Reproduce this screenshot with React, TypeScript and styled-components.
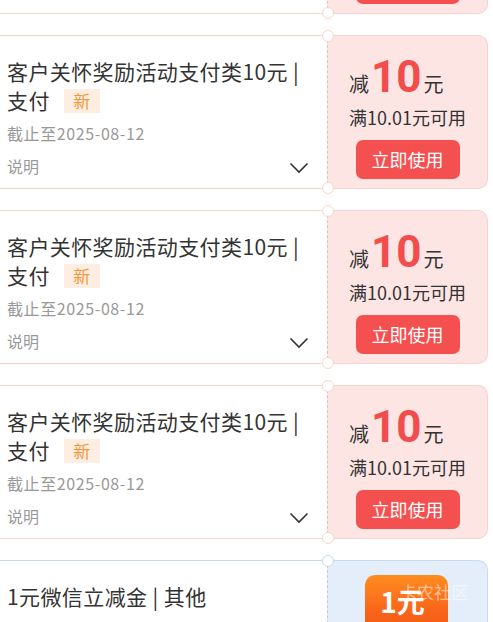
import React from "react";
import styled, { createGlobalStyle, css } from "styled-components";

const GlobalStyle = createGlobalStyle`
  body {
    margin: 0;
    background: #ffffff;
    overflow: hidden;
    font-family: "Noto Sans CJK SC", "Noto Sans", sans-serif;
  }
`;

type Tone = "red" | "blue";

const coupons = [
  { id: 0, date: "2025-08-12" },
  { id: 1, date: "2025-08-12" },
  { id: 2, date: "2025-08-12" },
  { id: 3, date: "2025-08-12" },
];

const App: React.FC = () => {
  return (
    <>
      <GlobalStyle />
      <List>
        {coupons.map((c) => (
          <Card key={c.id}>
            <LeftBlock tone="red">
              <Title>
                客户关怀奖励活动支付类10元 |<br />
                支付<NewTag>新</NewTag>
              </Title>
              <DateText>截止至{c.date}</DateText>
              <DescRow>
                <span>说明</span>
                <svg width="20" height="12" viewBox="0 0 20 12">
                  <path d="M1.5 1.5 L10 10 L18.5 1.5" fill="none" stroke="#333" strokeWidth="1.6" />
                </svg>
              </DescRow>
            </LeftBlock>
            <RightBlock tone="red">
              <Notch tone="red" pos="top" />
              <Notch tone="red" pos="bottom" />
              <AmountRow>
                <Small>减</Small>
                <Big>10</Big>
                <Small>元</Small>
              </AmountRow>
              <Condition>满10.01元可用</Condition>
              <UseButton>立即使用</UseButton>
            </RightBlock>
          </Card>
        ))}
        <Card>
          <LeftBlock tone="blue">
            <Title>1元微信立减金 | 其他</Title>
          </LeftBlock>
          <RightBlock tone="blue">
            <Notch tone="blue" pos="top" />
            <Badge>
              1元
              <Watermark>卡农社区</Watermark>
            </Badge>
          </RightBlock>
        </Card>
      </List>
    </>
  );
};

export default App;

const List = styled.div`
  display: flex;
  flex-direction: column;
  gap: 21px;
  margin-top: -140px;
  margin-left: -10px;
  width: 498px;
`;

const Card = styled.div`
  display: flex;
  height: 154px;
`;

const LeftBlock = styled.div<{ tone: Tone }>`
  flex: 1;
  box-sizing: border-box;
  background: #ffffff;
  border: 1px solid ${(p) => (p.tone === "red" ? "#f2d8cf" : "#c6d8ec")};
  border-right: none;
  border-radius: 10px 0 0 10px;
  padding: 21px 18px 0 16px;
  display: flex;
  flex-direction: column;
`;

const Title = styled.div`
  font-size: 21px;
  line-height: 29px;
  letter-spacing: 0.4px;
  color: #333333;
`;

const NewTag = styled.span`
  display: inline-block;
  margin-left: 14px;
  width: 36px;
  height: 24px;
  line-height: 24px;
  text-align: center;
  font-size: 17px;
  letter-spacing: 0;
  color: #f0983c;
  background: #fdeee1;
  vertical-align: 1px;
`;

const DateText = styled.div`
  margin-top: 8px;
  font-size: 16px;
  line-height: 20px;
  letter-spacing: 0.6px;
  color: #999999;
`;

const DescRow = styled.div`
  margin-top: 13px;
  display: flex;
  align-items: center;
  justify-content: space-between;
  font-size: 16px;
  line-height: 20px;
  color: #999999;
  svg {
    margin-top: 3px;
  }
`;

const RightBlock = styled.div<{ tone: Tone }>`
  position: relative;
  width: 161px;
  box-sizing: border-box;
  border-radius: 0 10px 10px 0;
  ${(p) =>
    p.tone === "red"
      ? css`
          background: #fde5e4;
          border: 1px solid #f7d2ce;
          border-left: 1px dashed #f0b9b6;
          padding-top: 18px;
        `
      : css`
          background: #e3eefa;
          border: 1px solid #c8daf0;
          border-left: 1px dashed #b9cde6;
          padding-top: 14px;
        `}
  display: flex;
  flex-direction: column;
  align-items: center;
`;

const Notch = styled.div<{ tone: Tone; pos: "top" | "bottom" }>`
  position: absolute;
  left: -6px;
  ${(p) => (p.pos === "top" ? "top: -6px;" : "bottom: -6px;")}
  width: 10px;
  height: 10px;
  border-radius: 50%;
  background: #ffffff;
  border: 1px solid ${(p) => (p.tone === "red" ? "#f2d8cf" : "#c6d8ec")};
`;

const AmountRow = styled.div`
  align-self: flex-start;
  margin-left: 21px;
  display: flex;
  align-items: baseline;
  height: 46px;
  color: #333333;
`;

const Small = styled.span`
  font-size: 20px;
`;

const Big = styled.span`
  font-family: "Roboto", "Noto Sans", sans-serif;
  font-size: 44px;
  font-weight: 700;
  color: #f24c4c;
  margin: 0 2px;
  line-height: 46px;
`;

const Condition = styled.div`
  margin-top: 4px;
  font-size: 18px;
  line-height: 26px;
  color: #333333;
`;

const UseButton = styled.div`
  margin-top: 10px;
  width: 104px;
  height: 39px;
  line-height: 39px;
  text-align: center;
  border-radius: 7px;
  background: #f4504f;
  color: #ffffff;
  font-size: 18px;
`;

const Badge = styled.div`
  position: relative;
  margin-left: -2px;
  width: 83px;
  height: 60px;
  border-radius: 10px 10px 0 0;
  background: linear-gradient(180deg, #ff8c1f 0%, #f8651a 60%, #f45512 100%);
  color: #ffffff;
  font-weight: 700;
  font-size: 28px;
  line-height: 52px;
  text-align: center;
  box-sizing: border-box;
  padding-right: 8px;
`;

const Watermark = styled.span`
  position: absolute;
  left: 35px;
  top: 7px;
  font-size: 17px;
  font-weight: 400;
  line-height: 20px;
  color: rgba(255, 255, 255, 0.55);
  white-space: nowrap;
`;
